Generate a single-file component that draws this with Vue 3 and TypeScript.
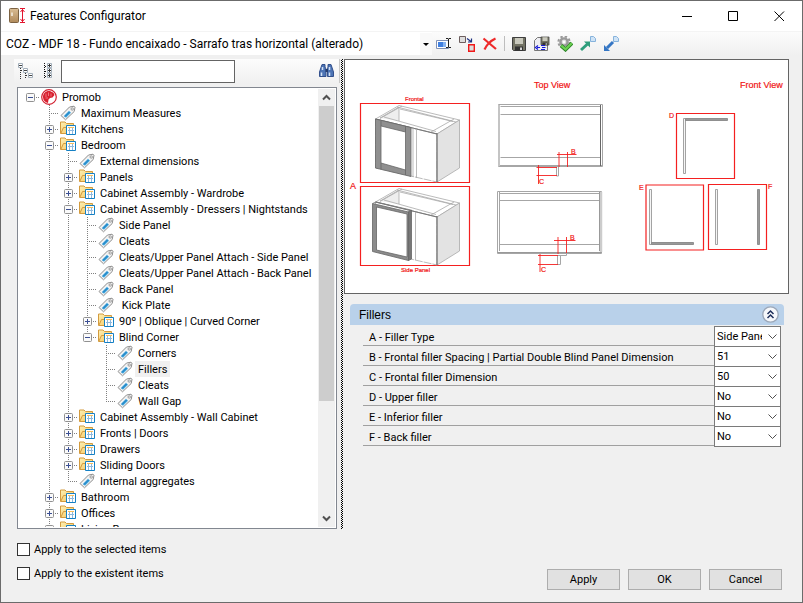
<script setup lang="ts">
import { computed, ref } from 'vue'

interface TreeNode {
  id: string
  label: string
  kind: 'root' | 'folder' | 'tag'
  open?: boolean
  children?: TreeNode[]
}

interface TreeRow {
  node: TreeNode
  depth: number
  last: boolean
  guides: boolean[]
}

interface Field {
  id: string
  label: string
  value: string
  options: string[]
}

const tag = (id: string, label: string): TreeNode => ({ id, label, kind: 'tag' })
const folder = (id: string, label: string, children: TreeNode[] = [], open = false): TreeNode => ({
  id,
  label,
  kind: 'folder',
  open,
  children
})

const tree = ref<TreeNode[]>([
  {
    id: 'promob',
    label: 'Promob',
    kind: 'root',
    open: true,
    children: [
      tag('max', 'Maximum Measures'),
      folder('kitchens', 'Kitchens'),
      folder('bedroom', 'Bedroom', [
        tag('ext', 'External dimensions'),
        folder('panels', 'Panels'),
        folder('wardrobe', 'Cabinet Assembly - Wardrobe'),
        folder('dressers', 'Cabinet Assembly - Dressers | Nightstands', [
          tag('side', 'Side Panel'),
          tag('cleats', 'Cleats'),
          tag('attach-side', 'Cleats/Upper Panel Attach - Side Panel'),
          tag('attach-back', 'Cleats/Upper Panel Attach - Back Panel'),
          tag('back', 'Back Panel'),
          tag('kick', ' Kick Plate'),
          folder('oblique', '90º | Oblique | Curved Corner'),
          folder('blind', 'Blind Corner', [
            tag('corners', 'Corners'),
            tag('fillers', 'Fillers'),
            tag('blind-cleats', 'Cleats'),
            tag('gap', 'Wall Gap')
          ], true)
        ], true),
        folder('wall', 'Cabinet Assembly - Wall Cabinet'),
        folder('fronts', 'Fronts | Doors'),
        folder('drawers', 'Drawers'),
        folder('sliding', 'Sliding Doors'),
        tag('aggregates', 'Internal aggregates')
      ], true),
      folder('bathroom', 'Bathroom'),
      folder('offices', 'Offices'),
      folder('living', 'Living Room')
    ]
  }
])

const selected = ref('fillers')
const search = ref('')
const model = ref('COZ - MDF 18 - Fundo encaixado - Sarrafo tras horizontal (alterado)')
const applySelected = ref(false)
const applyExistent = ref(false)
const panelOpen = ref(true)

function flatten(nodes: TreeNode[], depth: number, guides: boolean[]): TreeRow[] {
  return nodes.flatMap((node, i) => {
    const last = i === nodes.length - 1
    const row: TreeRow = { node, depth, last, guides }
    const below = node.open && node.children ? flatten(node.children, depth + 1, [...guides, !last]) : []
    return [row, ...below]
  })
}

const rows = computed(() => flatten(tree.value, 0, []))

function toggle(node: TreeNode) {
  node.open = !node.open
}

const fields = ref<Field[]>([
  { id: 'a', label: 'A - Filler Type', value: 'Side Panel', options: ['Side Panel', 'Frontal'] },
  { id: 'b', label: 'B - Frontal filler Spacing | Partial Double Blind Panel Dimension', value: '51', options: ['51'] },
  { id: 'c', label: 'C - Frontal filler Dimension', value: '50', options: ['50'] },
  { id: 'd', label: 'D - Upper filler', value: 'No', options: ['No', 'Yes'] },
  { id: 'e', label: 'E - Inferior filler', value: 'No', options: ['No', 'Yes'] },
  { id: 'f', label: 'F - Back filler', value: 'No', options: ['No', 'Yes'] }
])
</script>

<template>
  <div class="window">
    <svg class="defs" aria-hidden="true">
      <defs>
        <linearGradient id="folderFill" x1="0" y1="0" x2="1" y2="1">
          <stop offset="0" stop-color="#fdf0b4" />
          <stop offset="1" stop-color="#f6c55c" />
        </linearGradient>
        <linearGradient id="doorFill" x1="0" y1="0" x2="0" y2="1">
          <stop offset="0" stop-color="#d9bd94" />
          <stop offset="1" stop-color="#b08a5b" />
        </linearGradient>
        <symbol id="icon-folder" viewBox="0 0 16 16">
          <path d="M.5 12.500V1H5L6.500 2.500H13.500V12.500Z" fill="url(#folderFill)" stroke="#d39b3f" />
          <path d="M1 12L3.500 6.500H7" fill="none" stroke="#d39b3f" />
          <path d="M6.500 4.500H15.500V13.500H6.500Z" fill="#fff" stroke="#1580c4" />
          <path d="M8 6.500H14" stroke="#f5bd5c" />
          <path d="M8 9.500H14M9.500 7V13M12.500 7V13" stroke="#8db9de" fill="none" />
        </symbol>
        <symbol id="icon-tag" viewBox="0 0 16 16">
          <path d="M1 10.500L9.500 2L14 1.200L15 2.200L14.200 6.500L5.500 14.800Z" fill="#f3f3f3" stroke="#8e8e8e" stroke-width="1" stroke-linejoin="round" />
          <path d="M3.800 11L9 5.800L11 7.700L6 12.800Z" fill="#41a8e0" />
          <path d="M5 11.500L9.500 7" stroke="#1973b5" />
          <circle cx="12.200" cy="4" r="1.200" fill="#fff" stroke="#8e8e8e" stroke-width=".9" />
        </symbol>
        <symbol id="icon-root" viewBox="0 0 16 16">
          <circle cx="8" cy="8" r="7.300" fill="#fff" stroke="#d22030" stroke-width="1.200" />
          <path d="M9.500 2.200C5.500 1.200 1.800 4 2 8.200C2.200 11.300 4 13.500 7 14L7.500 10.500L9 9L11.500 8.500L13.500 6L12.500 3.800Z" fill="#d9202f" />
          <path d="M5 4.500V8M7.500 3.500V7M10 4.500V7.500M4.500 9H7" stroke="#f18c92" stroke-width=".8" />
        </symbol>
        <symbol id="icon-floppy" viewBox="0 0 16 16">
          <path d="M1.500 1.500H14.500V14.500H2.500L1.500 13.500Z" fill="#737364" stroke="#3e3e3e" />
          <path d="M4 2H12V8H4Z" fill="#c9c9bd" />
          <path d="M4 10.500H12V15H4Z" fill="#333" />
          <path d="M9 11.500H11V14H9Z" fill="#d5d5d5" />
        </symbol>
        <symbol id="icon-page" viewBox="0 0 6 6">
          <path d="M.5.500H3.500L5.500 2.500V5.500H.5Z" fill="#cfe3f6" stroke="#86b3dc" />
        </symbol>
      </defs>
    </svg>

    <header class="titlebar">
      <svg class="app-icon" viewBox="0 0 17 16" aria-hidden="true">
        <rect x=".5" y=".5" width="9" height="14" rx="1" fill="url(#doorFill)" stroke="#7c6242" />
        <path d="M3 4.500V8" stroke="#f6f1e6" stroke-width="1.500" />
        <path d="M11 .5H16M11 14.500H16M13.500 1V14" stroke="#e2142d" fill="none" />
        <path d="M11.500 4L13.500 1.500L15.500 4M11.500 11L13.500 13.500L15.500 11" stroke="#e2142d" fill="none" />
      </svg>
      <h1>Features Configurator</h1>
      <div class="window-buttons">
        <button type="button" aria-label="Minimize"><svg viewBox="0 0 11 11"><path d="M0 5.500H10" stroke="#000" /></svg></button>
        <button type="button" aria-label="Maximize"><svg viewBox="0 0 11 11"><path d="M.5.500H9.500V9.500H.5Z" fill="none" stroke="#000" /></svg></button>
        <button type="button" aria-label="Close"><svg viewBox="0 0 11 11"><path d="M.5.500L10 10M10 .5L.5 10" stroke="#000" /></svg></button>
      </div>
    </header>

    <div class="toolbar">
      <div class="model">
        <select v-model="model" aria-label="Model">
          <option>COZ - MDF 18 - Fundo encaixado - Sarrafo tras horizontal (alterado)</option>
        </select>
        <svg class="model-arrow" viewBox="0 0 12 22" aria-hidden="true"><path d="M3 10H9L6 13Z" /></svg>
      </div>
      <button type="button" aria-label="Rename">
        <svg viewBox="0 0 16 16">
          <path d="M.5 4.500H12.500V12.500H.5Z" fill="#fff" stroke="#8091b5" />
          <path d="M2 6H7V11H2Z" fill="#3f7fe0" />
          <path d="M7 6H10V11H7Z" fill="#86b4f2" />
          <path d="M10 2.500H12L12.500 3L13 2.500H15M10 11.500H12L12.500 11L13 11.500H15M12.500 3V11" stroke="#222" fill="none" />
        </svg>
      </button>
      <button type="button" aria-label="Replace">
        <svg viewBox="0 0 16 16">
          <path d="M.5.500H6.500V6.500H.5Z" fill="#ddd" stroke="#6d5e5e" />
          <path d="M8 2.500L12 5.500M12.500 2.500V6H9" stroke="#1c2f80" stroke-width="1.200" fill="none" />
          <path d="M9.700 8.700H15.300V15.300H9.700Z" fill="#ddd" stroke="#f01818" stroke-width="1.400" />
        </svg>
      </button>
      <button type="button" aria-label="Delete">
        <svg viewBox="0 0 16 16"><path d="M1.500 2.500L14 13M13.500 2.500Q6 6 2.500 13.500" stroke="#ee2a2a" stroke-width="2.200" fill="none" /></svg>
      </button>
      <span class="separator"></span>
      <button type="button" aria-label="Save"><svg viewBox="0 0 16 16"><use href="#icon-floppy" /></svg></button>
      <button type="button" aria-label="Save as">
        <svg viewBox="0 0 16 16">
          <path d="M.5 14.500V4.500L3.500 1.500H13.500V14.500Z" fill="#eeeef2" stroke="#777" />
          <use href="#icon-floppy" x="6" y="0" width="10" height="10" />
          <path d="M3 11.500H6M4 9.500L1.500 11.500L4 13.500M7 9.500H11M7 13.500H11M8 11.500H11.500" stroke="#1618d8" stroke-width="1.200" fill="none" />
        </svg>
      </button>
      <button type="button" aria-label="Validate">
        <svg viewBox="0 0 16 16">
          <circle cx="7" cy="6" r="5.600" fill="none" stroke="#999" stroke-width="2" stroke-dasharray="2.400 2" />
          <circle cx="7" cy="6" r="3.600" fill="#d8d8d8" stroke="#9a9a9a" stroke-width="2.400" />
          <circle cx="7" cy="6" r="1.400" fill="#fff" />
          <path d="M4 9.500L8.500 13.500L15 7" stroke="#2b8426" stroke-width="3.800" fill="none" />
          <path d="M4.300 9.700L8.500 13.300L14.700 7.200" stroke="#6cd052" stroke-width="2.200" fill="none" />
        </svg>
      </button>
      <button type="button" aria-label="Export">
        <svg viewBox="0 0 16 16">
          <path d="M1 14L7.500 8" stroke="#2e9e7c" stroke-width="3" />
          <path d="M4 5.500H10V11.500Z" fill="#2e9e7c" />
          <use href="#icon-page" x="10" y="0" width="6" height="6" />
        </svg>
      </button>
      <button type="button" aria-label="Import">
        <svg viewBox="0 0 16 16">
          <path d="M4 12L10 6" stroke="#3576c4" stroke-width="3" />
          <path d="M1 9V15H7Z" fill="#3576c4" />
          <use href="#icon-page" x="10" y="0" width="6" height="6" />
        </svg>
      </button>
    </div>

    <main class="content">
      <section class="left">
        <div class="tree-tools">
          <button type="button" aria-label="Collapse all">
            <svg viewBox="0 0 16 16">
              <path d="M2.500 5V16M3 7.500H6M7.500 10V16M8 12.500H11" stroke="#333" stroke-dasharray="1 1" fill="none" />
              <path d="M.5.500H4.500V4.500H.5ZM5.500 5.500H9.500V9.500H5.500ZM10.500 10.500H14.500V14.500H10.500Z" fill="#fff" stroke="#a3afba" />
              <path d="M1 2.500H4M6 7.500H9M11 12.500H14" stroke="#444" />
            </svg>
          </button>
          <button type="button" aria-label="Expand all">
            <svg viewBox="0 0 16 16">
              <path d="M3.500 0V16M4 3.500H6M4 8.500H6M4 13.500H6" stroke="#111" stroke-dasharray="1 1" fill="none" />
              <path d="M6.500.500H10.500V4.500H6.500ZM6.500 5.500H10.500V9.500H6.500ZM6.500 10.500H10.500V14.500H6.500Z" fill="#fff" stroke="#a3afba" />
              <path d="M7 2.500H10M8.500 1V4M7 7.500H10M8.500 6V9M7 12.500H10M8.500 11V14" stroke="#333" />
            </svg>
          </button>
          <input v-model="search" type="text" aria-label="Search" />
          <button type="button" class="find" aria-label="Find">
            <svg viewBox="0 0 16 16">
              <path d="M3 1.500H6V4L7 6V13.500H.5V9Z" fill="#4d74b5" stroke="#33508c" />
              <path d="M9 1.500H12L14.500 9V13.500H8.500V6L9 4Z" fill="#4d74b5" stroke="#33508c" />
              <path d="M6.500 6H9V9H6.500Z" fill="#243d70" />
              <path d="M2.500 9.500V13M10.500 9.500V13M3.500 4V7M10.500 4V7" stroke="#d5e3f6" stroke-width="1.500" />
            </svg>
          </button>
        </div>
        <div class="tree-box">
          <ul class="tree" role="tree" aria-label="Features">
            <li
              v-for="row in rows"
              :key="row.node.id"
              role="treeitem"
              :aria-level="row.depth + 1"
              :aria-selected="row.node.id === selected"
            >
              <span v-for="(on, g) in row.guides" :key="g" class="cell" :class="{ line: on && g > 0 }"></span>
              <span class="cell joint" :class="{ line: row.depth > 0, end: row.last }">
                <button
                  v-if="row.node.children"
                  type="button"
                  class="expander"
                  :aria-label="(row.node.open ? 'Collapse ' : 'Expand ') + row.node.label.trim()"
                  @click="toggle(row.node)"
                >
                  <svg viewBox="0 0 9 9">
                    <rect x=".5" y=".5" width="8" height="8" rx="1" fill="#fafafa" stroke="#919191" />
                    <path :d="row.node.open ? 'M2 4.500H7' : 'M2 4.500H7M4.500 2V7'" stroke="#3b4f93" />
                  </svg>
                </button>
              </span>
              <svg class="node-icon" viewBox="0 0 16 16" aria-hidden="true"><use :href="'#icon-' + row.node.kind" /></svg>
              <button
                type="button"
                class="node-label"
                :class="{ active: row.node.id === selected }"
                @click="selected = row.node.id"
              >{{ row.node.label }}</button>
            </li>
          </ul>
          <div class="scrollbar" aria-hidden="true">
            <svg viewBox="0 0 17 17"><path d="M5 10.500L8.500 7L12 10.500" /></svg>
            <span class="track"><span class="thumb"></span></span>
            <svg viewBox="0 0 17 17"><path d="M5 6.500L8.500 10L12 6.500" /></svg>
          </div>
        </div>
      </section>

      <div class="splitter" role="separator"></div>

      <section class="right">
        <svg class="preview" viewBox="345 60 443 233" role="img" aria-label="Filler views">
          <g fill="none" stroke="#f42020" stroke-width="1.200">
            <path d="M360.500 103.500H469.500V182.500H360.500ZM360.500 186.500H469.500V265.500H360.500Z" />
            <path d="M676.500 113.500H734.500V178.500H676.500ZM646 185H703.500V250H646ZM708.500 184.500H766.500V249.500H708.500Z" />
          </g>

          <g stroke="#aaa" stroke-width=".8" stroke-linejoin="round">
            <path d="M375.500 119L399 105.500L459.500 120L437 134Z" fill="#fff" />
            <path d="M380 118L399 107V121" fill="#eee" />
            <path d="M400 109L453 121.500M397 107L456 122M384 117L436 131.500M402 106L380 118.500M431 132L454 119" fill="none" />
            <path d="M375.500 119L437 134V182L375.500 168Z" fill="#fff" stroke-dasharray="8 1" />
            <path d="M437 134L459.500 120V168L437 182Z" fill="#e3e3e3" />
            <path d="M375.500 119L437 134M437 133V182" stroke="#777" stroke-width="1.200" />
            <path d="M375.500 119L411 127.500V176.500L375.500 168ZM381 126V163L405.500 170V132Z" fill="#8f8f8f" fill-rule="evenodd" stroke="#666" />
            <path d="M381 121V126M405.500 126V132M381 163V169M405.500 170V175" stroke="#666" />
            <path d="M413 128V177M416.500 129V178" fill="none" />
          </g>

          <g stroke="#aaa" stroke-width=".8" stroke-linejoin="round">
            <path d="M375.500 202L399 188.500L459.500 203L437 217Z" fill="#fff" />
            <path d="M380 201L399 190V204" fill="#eee" />
            <path d="M400 192L453 204.500M397 190L456 205M384 200L436 214.500M402 189L380 201.500M431 215L454 202" fill="none" />
            <path d="M375.500 202L437 217V265L375.500 251Z" fill="#fff" stroke-dasharray="8 1" />
            <path d="M437 217L459.500 203V251L437 265Z" fill="#e3e3e3" />
            <path d="M375.500 202L437 217M437 216V265" stroke="#777" stroke-width="1.200" />
            <path d="M408.500 211.500L411.500 210V259L408.500 260.500Z" fill="#777" stroke="#666" />
            <path d="M372.500 203.500L408.500 212V260.500L372.500 251.500ZM376.500 207V250L407 257V214Z" fill="#8c8c8c" fill-rule="evenodd" stroke="#666" />
            <path d="M372.500 203.500L376 202L411 210" fill="none" stroke="#777" />
            <path d="M415.500 212V260" fill="none" />
          </g>

          <g fill="none" stroke="#a6a6a6">
            <path d="M498.500 104.500H602.500V166.500H498.500ZM500.500 106.500H600.500M500.500 114.500H600.500M500.500 157.500H600.500M498.500 165.500H602.500" />
            <path d="M499 105V166" stroke="#c4c4c4" stroke-width="2" />
            <path d="M600.500 105V166" stroke="#666" />
            <path d="M556.500 167V176H558.500V167" />
            <path d="M497.500 191.500H601.500V253.500H497.500ZM499.500 193.500H599.500M499.500 200.500H599.500M499.500 244.500H599.500M499.500 192V251" />
            <path d="M601 192V252" stroke="#ccc" stroke-width="2.500" />
            <path d="M599.500 192V251M497.500 252.500H601.500" stroke="#999" />
            <path d="M557.500 255.500H566.500V253.500M557.500 255V264.500H560.500V255" />
          </g>
          <g fill="none" stroke="#f42020" stroke-width=".9">
            <path d="M557 154.500H576.500M559 152V167M567.500 152V167M536.500 167.500H557M536.500 175.500H557M538.500 165V184" />
            <path d="M554 240.500H575.500M558 237V254M566.500 237V253M538 255.500H558M538 264.500H558M540 254V272" />
          </g>

          <g stroke="#999" fill="#f5f5f5" stroke-width=".9">
            <path d="M683.500 118.500H685.500V173.500H683.500ZM649.500 189.500H651.500V244.500H649.500ZM715.500 189.500H717.500V244.500H715.500Z" />
            <path d="M685.500 118.500H727.500V120.500H685.500ZM651.500 242.500H693.500V244.500H651.500ZM757.500 189.500H759.500V244.500H757.500Z" fill="#999" stroke="#888" />
          </g>

          <g class="caption">
            <text x="405" y="101" font-size="6">Frontal</text>
            <text x="401" y="272" font-size="6">Side Panel</text>
            <text x="350" y="189" font-size="9">A</text>
            <text x="534" y="88" font-size="9">Top View</text>
            <text x="740" y="88" font-size="9">Front View</text>
            <text x="571" y="154" font-size="7">B</text>
            <text x="539" y="184" font-size="7">C</text>
            <text x="570" y="240" font-size="7">B</text>
            <text x="541" y="272" font-size="7">C</text>
            <text x="669" y="118" font-size="7">D</text>
            <text x="639" y="190" font-size="7">E</text>
            <text x="768" y="189" font-size="7">F</text>
          </g>
        </svg>

        <div class="panel">
          <div class="panel-head">
            <h2>Fillers</h2>
            <button type="button" aria-label="Toggle fillers" :aria-expanded="panelOpen" @click="panelOpen = !panelOpen">
              <svg viewBox="0 0 17 17">
                <circle cx="8.500" cy="8.500" r="7.700" fill="#f6f8fb" stroke="#9ba7b8" stroke-width="1.300" />
                <path d="M5.500 8L8.500 5L11.500 8M5.500 12L8.500 9L11.500 12" fill="none" stroke="#1f2f5c" stroke-width="1.500" />
              </svg>
            </button>
          </div>
          <div v-if="panelOpen" class="fields">
            <div v-for="field in fields" :key="field.id" class="field">
              <label :for="'field-' + field.id">{{ field.label }}</label>
              <div class="combo">
                <select :id="'field-' + field.id" v-model="field.value">
                  <option v-for="option in field.options" :key="option">{{ option }}</option>
                </select>
                <svg viewBox="0 0 9 9" aria-hidden="true"><path d="M.5 2.500L4.500 6.500L8.500 2.500" /></svg>
              </div>
            </div>
          </div>
        </div>
      </section>
    </main>

    <footer class="footer">
      <div class="checks">
        <label><input v-model="applySelected" type="checkbox" /><span>Apply to the selected items</span></label>
        <label><input v-model="applyExistent" type="checkbox" /><span>Apply to the existent items</span></label>
      </div>
      <div class="actions">
        <button type="button">Apply</button>
        <button type="button">OK</button>
        <button type="button">Cancel</button>
      </div>
    </footer>
  </div>
</template>

<style>
body {
  margin: 0;
  background: #f0f0f0;
}
</style>

<style scoped>
* {
  box-sizing: border-box;
}

.window {
  display: flex;
  flex-direction: column;
  height: 100vh;
  border: 1px solid #6b6b6b;
  background: #f0f0f0;
  color: #000;
  font: 11px/16px Roboto, "Liberation Sans", sans-serif;
}

.defs {
  position: absolute;
  width: 0;
  height: 0;
}

button,
input,
select {
  margin: 0;
  padding: 0;
  border: 0;
  border-radius: 0;
  background: none;
  color: inherit;
  font: inherit;
}

svg {
  display: block;
  flex: none;
}

.titlebar {
  display: flex;
  align-items: center;
  height: 30px;
  padding-left: 8px;
  background: #fff;
}

.app-icon {
  width: 17px;
  height: 16px;
}

h1 {
  flex: 1;
  margin: 0;
  padding-left: 4px;
  font: 12px/16px Roboto, "Open Sans", sans-serif;
}

.window-buttons {
  display: flex;
  align-self: stretch;
}

.window-buttons button {
  display: grid;
  place-items: center;
  width: 46px;
}

.window-buttons svg {
  width: 11px;
  height: 11px;
}

.toolbar {
  display: flex;
  align-items: center;
  height: 24px;
  border-top: 1px solid #f4f4f4;
  background: linear-gradient(#fcfcfc, #f0f0f0);
}

.toolbar > button {
  display: grid;
  place-items: center;
  width: 23px;
  height: 22px;
}

.toolbar > button svg {
  width: 16px;
  height: 16px;
}

.separator {
  width: 1px;
  height: 15px;
  margin: 0 2px 0 3px;
  background: #bdbdbd;
}

.model {
  display: grid;
  flex: none;
  width: 431px;
  height: 23px;
  background: #fff;
}

.model select {
  grid-area: 1 / 1;
  appearance: none;
  padding: 0 14px 0 5px;
  font: 12px/16px Roboto, "Open Sans", sans-serif;
}

.model-arrow {
  grid-area: 1 / 1;
  place-self: center end;
  width: 12px;
  height: 22px;
  background: #f9f9f9;
  pointer-events: none;
}

.content {
  display: flex;
  flex: 1;
  min-height: 0;
  padding: 4px 13px 0;
}

.left {
  display: flex;
  flex: none;
  flex-direction: column;
  width: 326px;
}

.tree-tools {
  display: flex;
  align-items: center;
  height: 24px;
  margin-bottom: 4px;
  border-right: 1px solid #c8c8c8;
  background: linear-gradient(#fcfcfc, #f0f0f0);
}

.tree-tools button {
  display: grid;
  place-items: center;
  width: 23px;
  height: 22px;
}

.tree-tools svg {
  width: 16px;
  height: 16px;
}

.tree-tools input {
  width: 174px;
  height: 23px;
  margin-left: 1px;
  padding: 0 4px;
  border: 1px solid #646464;
  background: #fff;
}

.tree-tools .find {
  margin-left: auto;
  margin-right: 1px;
}

.tree-box {
  display: flex;
  flex: 1;
  min-height: 0;
  margin: 0 3px;
  padding: 1px;
  border: 1px solid #828790;
  background: #fff;
}

.tree {
  flex: 1;
  min-width: 0;
  margin: 0;
  padding: 0 0 0 2px;
  overflow: hidden;
  list-style: none;
}

.tree li {
  display: flex;
  height: 16px;
}

.cell {
  flex: none;
  width: 19px;
  height: 16px;
}

.cell.line {
  background: repeating-linear-gradient(#808080 0 1px, transparent 1px 2px) 9px 0 / 1px 100% no-repeat;
}

.joint {
  display: grid;
  place-items: center;
  background: repeating-linear-gradient(90deg, #808080 0 1px, transparent 1px 2px) 9px 8px / 10px 1px no-repeat;
}

.joint.line {
  background:
    repeating-linear-gradient(#808080 0 1px, transparent 1px 2px) 9px 0 / 1px 100% no-repeat,
    repeating-linear-gradient(90deg, #808080 0 1px, transparent 1px 2px) 9px 8px / 10px 1px no-repeat;
}

.joint.line.end {
  background:
    repeating-linear-gradient(#808080 0 1px, transparent 1px 2px) 9px 0 / 1px 8px no-repeat,
    repeating-linear-gradient(90deg, #808080 0 1px, transparent 1px 2px) 9px 8px / 10px 1px no-repeat;
}

.expander,
.expander svg {
  width: 9px;
  height: 9px;
}

.node-icon {
  width: 16px;
  height: 16px;
  margin-left: 1px;
}

.node-label {
  margin-left: 2px;
  padding: 1px 3px 0;
  line-height: 15px;
  white-space: pre;
}

.node-label.active {
  background: #f0f0f0;
}

.scrollbar {
  display: flex;
  flex: none;
  flex-direction: column;
  width: 17px;
  background: #f0f0f0;
}

.scrollbar svg {
  width: 17px;
  height: 17px;
  fill: none;
  stroke: #505050;
  stroke-width: 2;
}

.track {
  flex: 1;
}

.thumb {
  display: block;
  width: 15px;
  height: 73%;
  margin-left: 1px;
  background: #cdcdcd;
}

.splitter {
  width: 3px;
  margin-left: 1px;
  padding-right: 1px;
  background: repeating-conic-gradient(#000 0 25%, #f0f0f0 0 50%) 0 0 / 2px 2px;
  background-clip: content-box;
}

.right {
  flex: 1;
  min-width: 0;
}

.preview {
  width: 100%;
  height: 235px;
  border: 1px solid #646464;
  background: #fff;
}

.caption {
  fill: #f01414;
  stroke: #f01414;
  stroke-width: .2px;
  font-family: "Liberation Sans", Arial, sans-serif;
}

.panel {
  padding: 10px 5px 0 6px;
}

.panel-head {
  display: flex;
  align-items: center;
  justify-content: space-between;
  height: 21px;
  padding: 0 5px 0 9px;
  border-radius: 4px 4px 0 0;
  background: #b9d1ea;
}

.panel-head h2 {
  margin: 0;
  font: 12px/16px "Liberation Sans", Arial, sans-serif;
}

.panel-head svg {
  width: 17px;
  height: 17px;
}

.fields {
  padding: 1px 3px 0 13px;
}

.field {
  display: flex;
  height: 20px;
  border-bottom: 1px solid #a0a0a0;
}

.field label {
  flex: 1;
  padding: 4px 0 0 6px;
  line-height: 15px;
  white-space: nowrap;
}

.combo {
  display: grid;
  flex: none;
  width: 67px;
  height: 21px;
  border: 1px solid #7a7a7a;
  background: #fff;
}

.combo select {
  grid-area: 1 / 1;
  width: 65px;
  padding: 0 18px 0 2px;
  appearance: none;
}

.combo svg {
  grid-area: 1 / 1;
  place-self: center end;
  width: 9px;
  height: 9px;
  margin-right: 3px;
  fill: none;
  stroke: #505050;
  pointer-events: none;
}

.footer {
  display: flex;
  flex: none;
  justify-content: space-between;
  height: 73px;
  padding: 12px 20px 12px 16px;
}

.checks {
  display: flex;
  flex-direction: column;
  gap: 8px;
}

.checks label {
  display: flex;
  align-items: center;
  gap: 4px;
  height: 16px;
}

.checks span {
  padding-top: 1px;
  line-height: 15px;
}

.checks input {
  width: 13px;
  height: 13px;
  border: 1px solid #333;
  background: #fff;
  appearance: none;
}

.checks input:checked {
  box-shadow: inset 0 0 0 2px #fff;
  background: #333;
}

.actions {
  display: flex;
  align-self: flex-end;
  gap: 8px;
}

.actions button {
  width: 73px;
  height: 21px;
  border: 1px solid #adadad;
  background: #e1e1e1;
}
</style>
